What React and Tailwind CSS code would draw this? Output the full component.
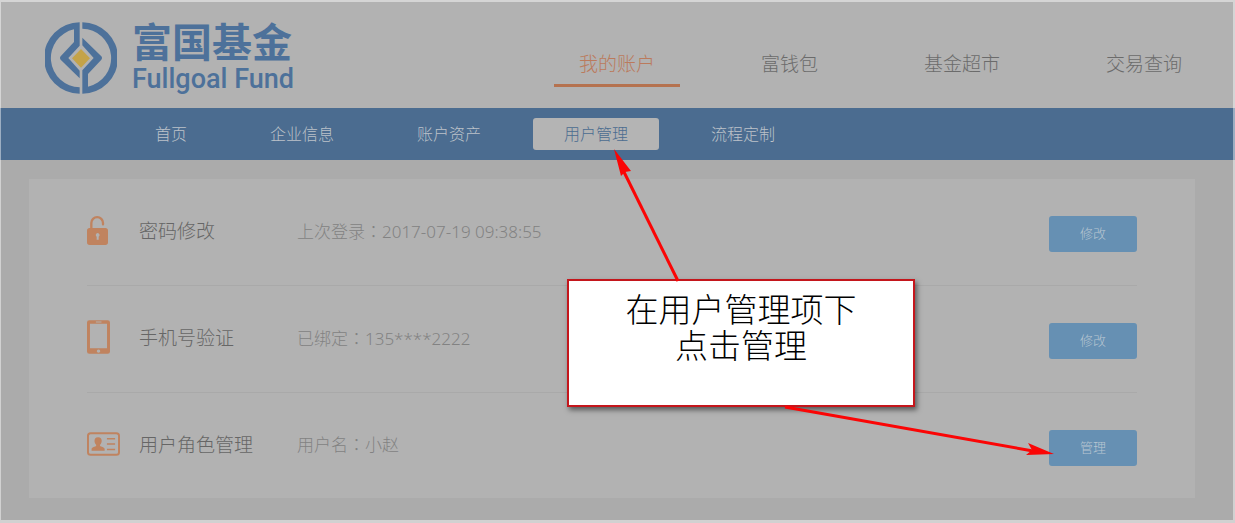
const mainTabs = ['我的账户', '富钱包', '基金超市', '交易查询'];

const subTabs = ['首页', '企业信息', '账户资产', '用户管理', '流程定制'];

const LockIcon = () => (
  <svg viewBox="0 0 63 87" className="w-[21px] h-[29px]" aria-hidden="true">
    <path d="M13 40V21a17 17 0 0 1 35 0v4" fill="none" stroke="currentColor" strokeWidth="7" strokeLinecap="round" />
    <path
      fillRule="evenodd"
      fill="currentColor"
      d="M8 36H55a8 8 0 0 1 8 8V79a8 8 0 0 1-8 8H8a8 8 0 0 1-8-8V44a8 8 0 0 1 8-8zM32 51a6 6 0 0 0-3 11V71h6V62a6 6 0 0 0-3-11z"
    />
  </svg>
);

const PhoneIcon = () => (
  <svg viewBox="0 0 70 102" className="w-[23px] h-[34px]" aria-hidden="true">
    <path
      fillRule="evenodd"
      fill="currentColor"
      d="M7 0H63a7 7 0 0 1 7 7V95a7 7 0 0 1-7 7H7a7 7 0 0 1-7-7V7a7 7 0 0 1 7-7zM9 11V85H61V11zM27 4V7H44V4zM35 89a5 5 0 1 0 .1 0z"
    />
  </svg>
);

const IdCardIcon = () => (
  <svg viewBox="0 0 101 72" className="w-[33px] h-[24px]" aria-hidden="true">
    <rect x="3" y="3" width="95" height="66" rx="8" fill="none" stroke="currentColor" strokeWidth="6" />
    <path
      fill="currentColor"
      d="M34 15c8 0 11 5 11 11 0 5-2 9-5 12v4c3 3 13 3 14 9v6H14v-6c1-6 11-6 14-9v-4c-3-3-5-7-5-12 0-6 3-11 11-11z"
    />
    <path d="M61 20H86M61 36H86M61 53H86" stroke="currentColor" strokeWidth="5" />
  </svg>
);

const rows = [
  { title: '密码修改', label: '上次登录', value: '2017-07-19 09:38:55', action: '修改', Icon: LockIcon },
  { title: '手机号验证', label: '已绑定', value: '135****2222', action: '修改', Icon: PhoneIcon },
  { title: '用户角色管理', label: '用户名', value: '小赵', action: '管理', Icon: IdCardIcon },
];

const Logo = () => (
  <a href="#" className="flex items-center gap-[15px] text-[#4d719a]">
    <svg viewBox="-108 -108 216 216" className="w-[72px] h-[72px]" aria-hidden="true">
      <g fill="currentColor">
        <path d="M-4-107A107 107 0 0 0-4 107V88A88 88 0 0 1-21-86V-48L-61-5Q-65 0-61 5L-4 61V38L-38 0L-4-37z" />
        <path
          transform="rotate(180)"
          d="M-4-107A107 107 0 0 0-4 107V88A88 88 0 0 1-21-86V-48L-61-5Q-65 0-61 5L-4 61V38L-38 0L-4-37z"
        />
      </g>
      <path d="M0-27L27 1L0 29L-27 1z" fill="#c4a348" />
    </svg>
    <span className="flex flex-col">
      <span className="text-[40px] leading-[42px] font-bold">富国基金</span>
      <span className="text-[27px] leading-[32px] font-medium font-['Roboto',sans-serif]">Fullgoal Fund</span>
    </span>
  </a>
);

const Header = () => (
  <header className="flex items-center justify-between h-[108px] pl-[45px] pr-7 pt-2 bg-[#b2b2b2]">
    <Logo />
    <nav className="flex gap-14 pt-5">
      {mainTabs.map((tab, index) => (
        <a
          key={tab}
          href="#"
          className={`px-[25px] pb-1.5 border-b-3 text-[19px] leading-7 whitespace-nowrap ${
            index === 0 ? 'text-[#bb7a5c] border-[#b5724f]' : 'text-[#6b6b6b] border-transparent'
          }`}
        >
          {tab}
        </a>
      ))}
    </nav>
  </header>
);

const SubNav = () => (
  <nav className="flex items-center gap-[21px] h-[52px] pl-[124px] bg-[#4b6c90]">
    {subTabs.map((tab) => (
      <a
        key={tab}
        href="#"
        className={`px-[31px] rounded-[3px] text-base leading-8 whitespace-nowrap ${
          tab === '用户管理' ? 'bg-[#b4b4b4] text-[#4b6c90]' : 'text-[#bcc2c9]'
        }`}
      >
        {tab}
      </a>
    ))}
  </nav>
);

const SettingRow = ({ title, label, value, action, Icon }) => (
  <li className="flex items-center h-[107px] last:h-[105px] border-b border-[#a9a9a9] last:border-b-0">
    <span className="w-[52px] pb-1 text-[#c0835f]">
      <Icon />
    </span>
    <h2 className="w-[158px] pb-0.5 text-[19px] leading-7 text-[#666666]">{title}</h2>
    <p className="flex-1 pb-0.5 text-[17px] leading-7 text-[#828282]">
      {label}
      <span className="font-['Noto_Sans_CJK_TC',sans-serif]">：</span>
      <span className="font-['Noto_Sans','Noto_Sans_CJK_SC',sans-serif]">{value}</span>
    </p>
    <button
      type="button"
      className="w-[88px] h-9 mt-1 rounded-[3px] bg-[#6690b3] text-[13px] text-[#b9c6d2]"
    >
      {action}
    </button>
  </li>
);

const Callout = () => (
  <>
    <svg
      viewBox="0 0 68 134"
      className="absolute left-[613px] top-[148px] w-[68px] h-[134px] z-10"
      aria-hidden="true"
    >
      <path d="M10 22L65 133" stroke="#fb0505" strokeWidth="3" />
      <path d="M1 1L18 23L12 24L8 28z" fill="#fb0505" />
    </svg>
    <svg
      viewBox="0 0 272 52"
      className="absolute left-[783px] top-[405px] w-[272px] h-[52px] z-10"
      aria-hidden="true"
    >
      <path d="M2 2L250 46" stroke="#fb0505" strokeWidth="3" />
      <path d="M271 49L245 38L249 45L243 50z" fill="#fb0505" />
    </svg>
    <p className="absolute left-[567px] top-[279px] w-[348px] h-[128px] pt-[11px] border-2 border-[#c4161c] bg-white shadow-[2px_3px_5px_rgba(0,0,0,0.5)] text-center text-[33px] leading-9 font-light text-black">
      在用户管理项下
      <br />
      点击管理
    </p>
  </>
);

const App = () => {
  return (
    <div className="relative bg-[#ababab] font-light font-['Open_Sans','Noto_Sans_CJK_SC',sans-serif]">
      <Header />
      <SubNav />
      <main className="pt-[19px] pr-10 pb-[25px] pl-[29px]">
        <ul className="px-[58px] bg-[#b2b2b2]">
          {rows.map((row) => (
            <SettingRow key={row.title} {...row} />
          ))}
        </ul>
      </main>
      <div className="absolute inset-0 border-t-2 border-r-2 border-b-3 border-l border-white/45 pointer-events-none" />
      <Callout />
    </div>
  );
};

export default App;
